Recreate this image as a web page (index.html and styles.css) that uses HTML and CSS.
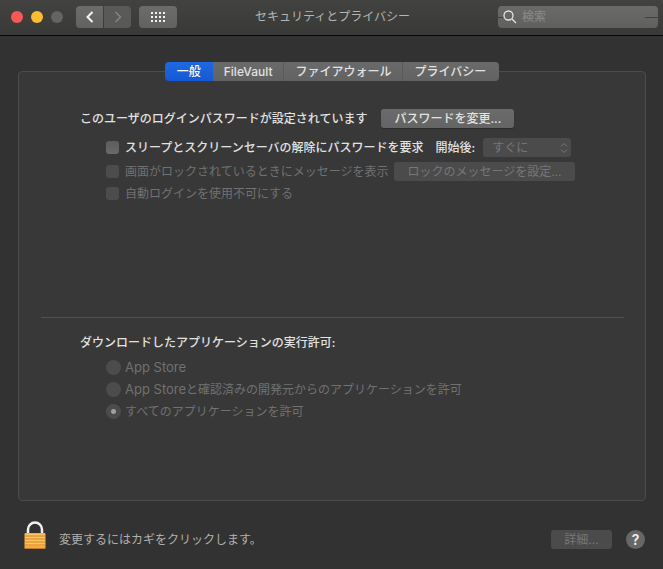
FILE: index.html
```html
<!DOCTYPE html>
<html lang="ja">
<head>
    <meta charset="UTF-8">
    <meta name="viewport" content="width=device-width, initial-scale=1">
    <title>セキュリティとプライバシー</title>
    <link rel="stylesheet" href="styles.css">
</head>
<body>
    <header class="titlebar">
        <div class="titlebar-left">
            <div class="lights">
                <button class="light close" aria-label="閉じる"></button>
                <button class="light minimize" aria-label="しまう"></button>
                <button class="light" aria-label="拡大" disabled></button>
            </div>
            <div class="nav">
                <button class="tool-btn nav-btn" aria-label="戻る">
                    <svg width="10" height="14" viewBox="0 0 10 14"><path d="M7.5 2 2.5 7l5 5"/></svg>
                </button>
                <button class="tool-btn nav-btn" aria-label="進む" disabled>
                    <svg width="10" height="14" viewBox="0 0 10 14"><path d="m2.5 2 5 5-5 5"/></svg>
                </button>
            </div>
            <button class="tool-btn grid-btn" aria-label="すべてを表示">
                <svg width="14" height="10" viewBox="0 0 14 10">
                    <path class="dots" d="M0 1h14M0 5h14M0 9h14"/>
                </svg>
            </button>
        </div>
        <h1 class="title">セキュリティとプライバシー</h1>
        <label class="search">
            <svg width="14" height="14" viewBox="0 0 14 14"><circle cx="5.5" cy="5.5" r="4.5"/><path d="m9 9 4 4"/></svg>
            <input type="search" placeholder="検索" aria-label="検索">
        </label>
    </header>

    <main class="content">
        <nav class="tabs">
            <button class="tab active">一般</button>
            <button class="tab">FileVault</button>
            <button class="tab">ファイアウォール</button>
            <button class="tab">プライバシー</button>
        </nav>

        <section class="panel">
            <div class="login">
                <div class="row">
                    <span>このユーザのログインパスワードが設定されています</span>
                    <button class="btn change-btn">パスワードを変更...</button>
                </div>
                <div class="row option">
                    <input type="checkbox" id="require">
                    <label for="require">スリープとスクリーンセーバの解除にパスワードを要求</label>
                    <label class="delay-label" for="delay">開始後:</label>
                    <span class="select">
                        <select id="delay" disabled>
                            <option>すぐに</option>
                        </select>
                        <svg width="8" height="12" viewBox="0 0 8 12"><path d="M1 4.5 4 1.5l3 3M1 7.5l3 3 3-3"/></svg>
                    </span>
                </div>
                <div class="row option disabled">
                    <input type="checkbox" id="message" disabled>
                    <label for="message">画面がロックされているときにメッセージを表示</label>
                    <button class="btn message-btn" disabled>ロックのメッセージを設定...</button>
                </div>
                <div class="row option disabled">
                    <input type="checkbox" id="autologin" disabled>
                    <label for="autologin">自動ログインを使用不可にする</label>
                </div>
            </div>

            <hr>

            <div class="downloads">
                <h2>ダウンロードしたアプリケーションの実行許可:</h2>
                <div class="row option disabled">
                    <input type="radio" name="allow" id="store" disabled>
                    <label for="store"><span class="latin">App Store</span></label>
                </div>
                <div class="row option disabled">
                    <input type="radio" name="allow" id="identified" disabled>
                    <label for="identified"><span class="latin">App Store</span>と確認済みの開発元からのアプリケーションを許可</label>
                </div>
                <div class="row option disabled">
                    <input type="radio" name="allow" id="anywhere" checked disabled>
                    <label for="anywhere">すべてのアプリケーションを許可</label>
                </div>
            </div>
        </section>
    </main>

    <footer class="footer">
        <button class="lock" aria-label="カギ">
            <svg width="22" height="28" viewBox="0 0 22 28">
                <path class="shackle" d="M4 13V8.5a7 7 0 0 1 14 0V13"/>
                <rect x="0.5" y="12" width="21" height="16" rx="1" fill="#f5ac42" stroke="none"/>
                <path d="M1 13.5h20M1 16.5h20M1 19.5h20M1 22.5h20" stroke="#ffc562"/>
                <path d="M1 15h20M1 18h20M1 21h20M1 24h20" stroke="#e09a38"/>
                <path d="M1 27.5h20" stroke="#c07a28"/>
            </svg>
        </button>
        <p>変更するにはカギをクリックします。</p>
        <button class="btn details-btn" disabled>詳細...</button>
        <button class="help" aria-label="ヘルプ">?</button>
    </footer>
</body>
</html>
```

FILE: styles.css
```css
* {
    box-sizing: border-box;
}

body {
    display: flex;
    flex-direction: column;
    min-height: 100vh;
    margin: 0;
    background-color: #323232;
    color: #e2e2e2;
    font-family: Inter, "Noto Sans CJK JP", sans-serif;
    font-size: 12px;
    font-weight: 500;
    line-height: 18px;
}

button, input, select {
    margin: 0;
    padding: 0;
    border: none;
    color: inherit;
    font: inherit;
}

h1, h2, p {
    margin: 0;
    font-size: 12px;
    font-weight: 500;
}

svg {
    display: block;
    fill: none;
    stroke: currentColor;
}

.titlebar {
    display: grid;
    grid-template-columns: 1fr auto 1fr;
    align-items: center;
    height: 36px;
    padding: 0 5px 2px 11px;
    background: linear-gradient(#424340, #393a37);
    border-bottom: 1px solid #050505;
}

.titlebar-left, .lights, .nav {
    display: flex;
    align-items: center;
}

.lights {
    gap: 8px;
    margin-right: 13px;
}

.light {
    width: 12px;
    height: 12px;
    border-radius: 50%;
    background-color: #646562;
}

.close {
    background-color: #fc5753;
}

.minimize {
    background-color: #fdbc2e;
}

.nav {
    gap: 1px;
    margin-right: 8px;
}

.tool-btn {
    display: flex;
    align-items: center;
    justify-content: center;
    height: 22px;
    border-radius: 4px;
    background: linear-gradient(#6c6d6a, #626360);
    color: #f4f4f4;
}

.tool-btn svg {
    stroke-width: 2;
}

.nav-btn {
    width: 27px;
}

.nav-btn:first-child {
    border-radius: 4px 0 0 4px;
}

.nav-btn:last-child {
    border-radius: 0 4px 4px 0;
    background: #595a57;
    color: #858683;
}

.nav-btn:last-child svg {
    stroke-width: 1.5;
}

.grid-btn {
    width: 38px;
}

.dots {
    stroke-dasharray: 2 2;
}

.title {
    padding-right: 4px;
    color: #b4b5b2;
    font-weight: 400;
}

.search {
    display: flex;
    align-items: center;
    justify-self: end;
    gap: 5px;
    width: 160px;
    height: 22px;
    padding: 0 5px;
    border-radius: 4px;
    background:
        linear-gradient(#41423f, #41423f) right 11px / 13px 1px no-repeat,
        linear-gradient(#41423f, #41423f) left 11px / 5px 1px no-repeat,
        linear-gradient(#6a6b68, #60615e);
    color: #e4e4e4;
}

.search svg {
    flex: none;
    stroke-width: 1.3;
}

.search input {
    width: 100px;
    background: none;
    outline: none;
}

.search input::placeholder {
    color: #858683;
}

.content {
    display: flex;
    flex: 1;
    flex-direction: column;
    padding: 26px 17px 0 18px;
}

.tabs {
    z-index: 1;
    display: flex;
    align-self: center;
    height: 19px;
    border-radius: 4px;
    overflow: hidden;
}

.tab {
    padding: 0 12px;
    background: linear-gradient(#6a6a6a, #626262);
    line-height: 19px;
}

.tab + .tab {
    padding: 0 11px;
    border-left: 1px solid #5a5a5a;
}

.tab.active {
    background: linear-gradient(#1d69e3, #1459d4);
    color: #fff;
}

.tab.active + .tab {
    border-left: none;
}

.tab:last-child {
    padding-right: 13px;
}

.panel {
    flex: 1;
    margin-top: -10px;
    padding: 37px 21px 0 22px;
    border: 1px solid #4c4c4c;
    border-radius: 4px;
    background-color: #383838;
}

.login {
    min-height: 208px;
    padding-left: 39px;
}

.row {
    display: flex;
    align-items: center;
    min-height: 19px;
}

.option {
    gap: 6px;
    margin-bottom: 3px;
    padding-left: 26px;
}

.disabled {
    color: #717171;
    font-weight: 400;
}

.btn {
    height: 19px;
    border-radius: 3px;
    background: linear-gradient(#6b6b6b, #646464);
    line-height: 19px;
    box-shadow: 0 1px 1px #2c2c2c;
}

.btn:disabled {
    background: #4b4b4b;
    box-shadow: none;
    color: #777;
}

.change-btn {
    margin-left: 14px;
    padding: 0 13px;
}

.row:first-child {
    margin-bottom: 10px;
}

.row:nth-child(2) {
    margin-bottom: 5px;
}

.message-btn {
    padding: 0 13px;
}

input[type="checkbox"], input[type="radio"] {
    flex: none;
    appearance: none;
    width: 13px;
    height: 13px;
    border-radius: 3px;
    background: linear-gradient(#5c5c5c, #6a6a6a);
}

input[type="radio"] {
    width: 15px;
    height: 15px;
    margin-right: -2px;
    border-radius: 50%;
}

input[type="checkbox"]:disabled, input[type="radio"]:disabled {
    background: #4c4c4c;
}

input[type="radio"]:checked:disabled {
    background: radial-gradient(circle, #a0a0a0 2px, #4c4c4c 3px);
}

.delay-label {
    margin-left: 6px;
}

.select {
    display: grid;
    align-items: center;
    margin-left: 2px;
    color: #777;
}

.select select, .select svg {
    grid-area: 1 / 1;
}

.select select {
    appearance: none;
    width: 88px;
    height: 19px;
    padding: 0 9px;
    border-radius: 3px;
    background-color: #4b4b4b;
    opacity: 1;
    font-weight: 400;
    line-height: 19px;
}

.select svg {
    justify-self: end;
    margin-right: 3px;
    pointer-events: none;
}

hr {
    width: 100%;
    height: 1px;
    margin: 0;
    border: none;
    background-color: #505050;
}

.downloads {
    padding: 16px 0 16px 39px;
}

.downloads h2 {
    margin-bottom: 6px;
    line-height: 18px;
}

.downloads .row {
    margin-bottom: 3px;
}

.latin {
    font-size: 13px;
}

.footer {
    display: flex;
    align-items: flex-end;
    padding: 20px 18px 20px 24px;
    color: #b0b0b0;
    font-weight: 400;
}

.footer p {
    font-weight: 400;
}

.lock {
    margin-right: 13px;
    background: none;
}

.shackle {
    stroke: #f0f0f0;
    stroke-width: 2.5;
}

.details-btn {
    width: 61px;
    margin: 0 14px 0 auto;
}

.help {
    width: 19px;
    height: 19px;
    border-radius: 50%;
    background-color: #676767;
    color: #f0f0f0;
    font-size: 14px;
    font-weight: 600;
    line-height: 19px;
}
```
